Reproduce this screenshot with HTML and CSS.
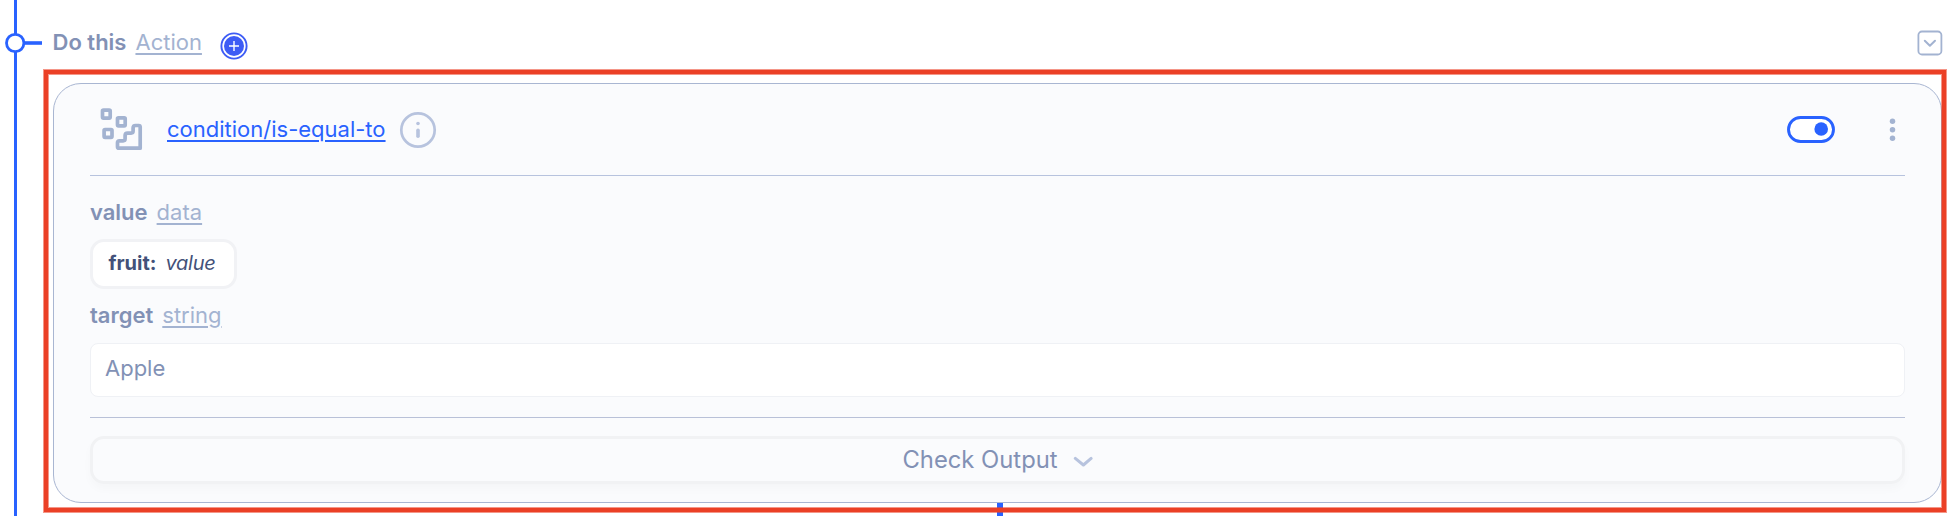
FILE: index.html
```
<!DOCTYPE html>
<html lang="en">
<head>
<meta charset="utf-8">
<title>Workflow step</title>
<link rel="stylesheet" href="styles.css">
</head>
<body>
<main class="flow">
  <div class="rail"></div>
  <svg class="rail-node" width="44" height="24" viewBox="0 0 44 24"><path d="M24 12H42" stroke="#2962ff" stroke-width="3.6"/><circle cx="15.2" cy="12" r="8.7" fill="#fff" stroke="#2962ff" stroke-width="2.8"/></svg>

  <header class="step-head">
    <span class="label step-title">Do this</span>
    <a class="type step-type">Action</a>
    <svg class="add" width="28" height="28" viewBox="0 0 28 28"><circle cx="14" cy="14" r="12.6" fill="#fff" stroke="#3d5cf5" stroke-width="1.9"/><circle cx="14" cy="14" r="10" fill="#3d5cf5"/><path d="M14 9v10M9 14h10" stroke="#fff" stroke-width="1.4"/></svg>
    <svg class="collapse" width="26" height="26" viewBox="0 0 26 26" fill="none" stroke="#a3b3d1" stroke-linecap="round" stroke-linejoin="round"><rect x="1.4" y="1.5" width="23" height="23" rx="3.6" stroke-width="1.8"/><path d="M7.8 10.8l5.1 5 5.1-5" stroke-width="2"/></svg>
  </header>

  <section class="card">
    <div class="card-head">
      <svg class="blocks" width="44" height="44" viewBox="0 0 44 44" fill="none" stroke="#a3b3d1" stroke-width="3.7" stroke-linejoin="round"><rect x="3.5" y="3.1" width="7.7" height="8" rx="1"/><rect x="18.5" y="10.8" width="7.7" height="8" rx="1"/><rect x="5.1" y="22.5" width="7.9" height="7.8" rx="1"/><path d="M20 41.2H41.2V20Q41.2 18.5 39.7 18.5H36.6Q34.1 18.5 34.1 21V24.1Q34.1 26.1 32.1 26.1H28.6Q26.1 26.1 26.1 28.6V31.8Q26.1 33.8 24.1 33.8H20.5Q18.5 33.8 18.5 35.8V39.7Q18.5 41.2 20 41.2Z"/></svg>
      <a class="operator">condition/is-equal-to</a>
      <svg class="info" width="38" height="38" viewBox="0 0 38 38" fill="none" stroke="#b7c3de" stroke-linecap="round"><circle cx="19" cy="19" r="16.7" stroke-width="2.7"/><path d="M19 19.2v6" stroke-width="3.6"/><circle cx="19" cy="12.5" r="1.8" fill="#b7c3de" stroke="none"/></svg>
      <svg class="toggle" width="48" height="28" viewBox="0 0 48 28"><rect x="1.5" y="2.5" width="45" height="24" rx="12" fill="#fff" stroke="#2962ff" stroke-width="2.9"/><circle cx="34.2" cy="14" r="6.8" fill="#2962ff"/></svg>
      <svg class="more" width="7" height="24" viewBox="0 0 7 24" fill="#a3b3d1"><circle cx="3.5" cy="4.2" r="2.75"/><circle cx="3.5" cy="12.7" r="2.75"/><circle cx="3.5" cy="21.2" r="2.75"/></svg>
    </div>
    <div class="fields">
      <div class="field-name"><span class="label">value</span><a class="type">data</a></div>
      <div class="token"><b class="token-key">fruit:</b><i class="token-value">value</i></div>
      <div class="field-name target-name"><span class="label">target</span><a class="type">string</a></div>
      <div class="input">Apple</div>
    </div>
    <div class="output">
      <span class="output-text">Check Output</span>
      <svg class="output-chevron" width="20" height="12" viewBox="0 0 20 12" fill="none" stroke="#b7c3de" stroke-width="3" stroke-linecap="round" stroke-linejoin="round"><path d="M2.3 2.4L10.4 9l7.7-6.6"/></svg>
    </div>
  </section>
  <div class="connector"></div>
  <div class="highlight"></div>
</main>
</body>
</html>
```
FILE: styles.css
```
* { box-sizing: border-box; }
body {
  margin: 0;
  background: #fff;
  font-family: Inter, "Liberation Sans", sans-serif;
  font-size: 22px;
  line-height: 30px;
  color: #8291b5;
}
svg { display: block; flex: none; }
.flow {
  position: relative;
  width: 1958px;
  height: 516px;
  padding: 0 15px 0 53px;
  overflow: hidden;
}
.rail { position: absolute; left: 14px; top: 0; width: 3px; height: 516px; background: #2962ff; }
.rail-node { position: absolute; left: 0; top: 31px; }
.label { font-weight: 600; color: #8291b5; white-space: nowrap; }
.type {
  margin-left: 9px;
  color: #a3b3d1;
  text-decoration: underline;
  text-decoration-thickness: 2px;
  text-underline-offset: 3px;
}
.step-head { display: flex; align-items: center; height: 83px; padding-top: 1px; }
.step-title { margin-left: -0.5px; }
.add { margin: 7px 0 0 18px; }
.collapse { margin: 1px 0 0 auto; }
.card {
  width: 1889px;
  height: 420px;
  padding: 0 36px;
  border: 1px solid #a9b6d2;
  border-radius: 28px;
  background: #fafbfd;
}
.card-head {
  display: flex;
  align-items: center;
  height: 92px;
  padding-bottom: 1px;
  border-bottom: 1px solid #b7c3de;
}
.blocks { margin-left: 9px; }
.operator {
  margin-left: 24px;
  color: #2962ff;
  text-decoration: underline;
  text-decoration-thickness: 2px;
  text-underline-offset: 3px;
}
.info { margin: 2px 0 0 13px; }
.toggle { margin-left: auto; }
.more { margin: 0 9px 0 54px; }
.fields { height: 242px; padding-top: 21px; border-bottom: 1px solid #b9c1d8; }
.field-name { display: flex; }
.target-name { margin-top: 11px; }
.token {
  display: flex;
  align-items: center;
  width: 147px;
  height: 50px;
  margin-top: 12px;
  padding: 0 0 3px 15.5px;
  border: 3px solid #f1f2f5;
  border-radius: 14px;
  background: #fff;
  color: #435179;
  font-size: 20px;
}
.token-key { font-weight: 650; }
.token-value { margin-left: 9px; letter-spacing: -0.25px; }
.input {
  height: 54px;
  margin-top: 13px;
  padding: 9px 14px;
  border: 1px solid #eff1f5;
  border-radius: 8px;
  background: #fff;
}
.output {
  display: flex;
  align-items: center;
  justify-content: center;
  height: 48px;
  margin-top: 18px;
  border: 3px solid #f1f2f4;
  border-radius: 14px;
  box-shadow: 0 5px 10px rgba(60, 60, 60, .025);
  font-size: 23.8px;
}
.output-chevron { margin: 4px 0 0 15px; }
.connector { position: absolute; left: 997px; top: 503px; width: 6px; height: 13px; background: #2962ff; }
.highlight {
  position: absolute;
  left: 44px;
  top: 70px;
  width: 1902px;
  height: 442px;
  border: 4px solid #eb4026;
  box-shadow: 0 0 0 1px rgba(235, 64, 38, .55), inset 0 0 0 1px rgba(235, 64, 38, .55);
}
```
